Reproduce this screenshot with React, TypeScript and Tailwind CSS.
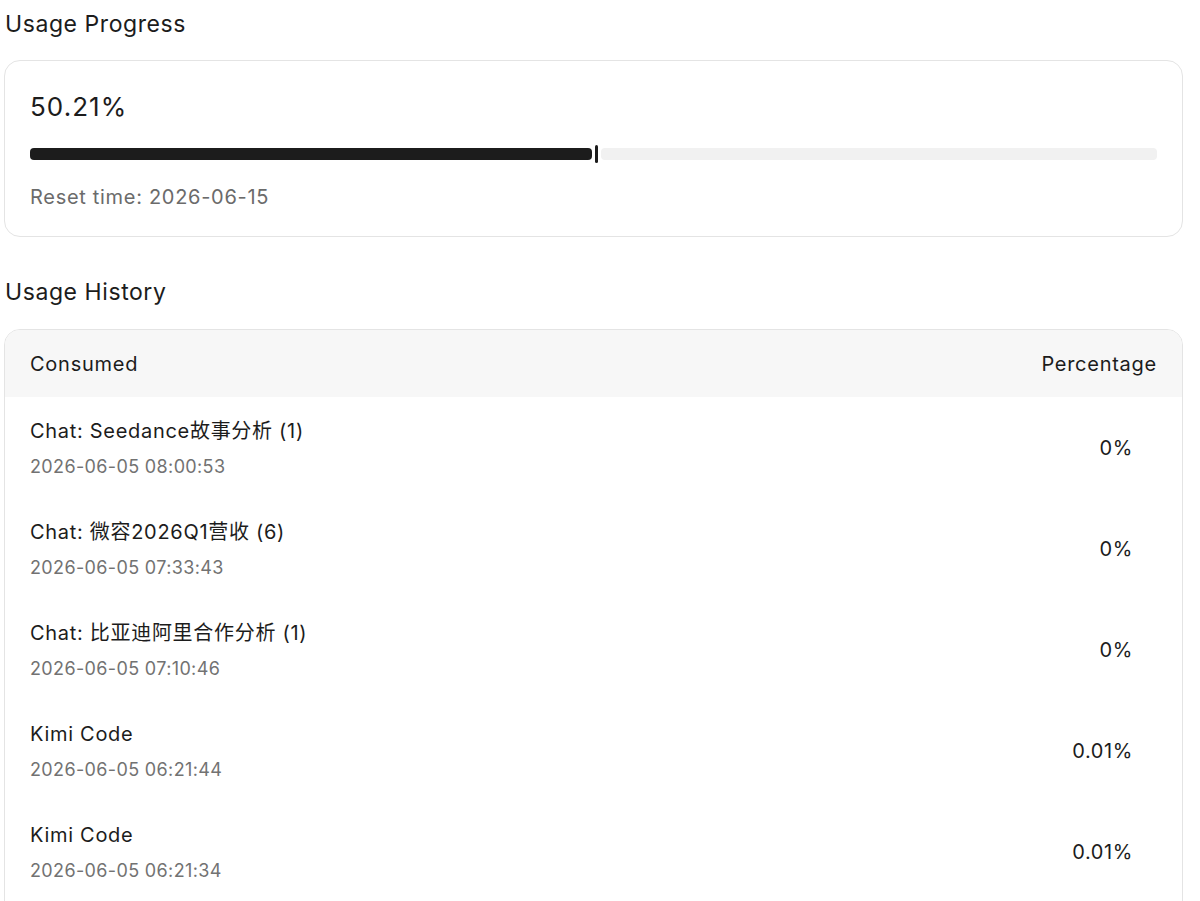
import React from 'react';

interface HistoryRow {
  title: string;
  time: string;
  percent: string;
}

const rows: HistoryRow[] = [
  { title: 'Chat: Seedance故事分析 (1)', time: '2026-06-05 08:00:53', percent: '0%' },
  { title: 'Chat: 微容2026Q1营收 (6)', time: '2026-06-05 07:33:43', percent: '0%' },
  { title: 'Chat: 比亚迪阿里合作分析 (1)', time: '2026-06-05 07:10:46', percent: '0%' },
  { title: 'Kimi Code', time: '2026-06-05 06:21:44', percent: '0.01%' },
  { title: 'Kimi Code', time: '2026-06-05 06:21:34', percent: '0.01%' },
];

const usage = 50.21;

function ProgressBar({ value }: { value: number }) {
  return (
    <div className="flex h-[18px] items-center">
      <div className="h-3 rounded-[4px] bg-[#1c1c1c]" style={{ width: `calc(${value}% - 4px)` }} />
      <div className="mx-[3px] h-[18px] w-[3px] rounded-full bg-[#1c1c1c]" />
      <div className="h-3 flex-1 rounded-[4px] bg-[#f1f1f1]" />
    </div>
  );
}

export default function App() {
  return (
    <div
      className="min-h-screen bg-white pl-[4px] pr-[17px] text-[#1c1c1c]"
      style={{ fontFamily: 'Inter, "Noto Sans CJK SC", sans-serif' }}
    >
      <h2 className="pl-[1px] pt-[9px] text-[23px] leading-[30px] font-normal tracking-[0.025em]">Usage Progress</h2>

      <div className="mt-[21px] rounded-[16px] border border-[#e4e4e4] px-[25px] pb-[25px] pt-[27px]">
        <div className="text-[26px] leading-[38px] tracking-[0.04em]">50.21%</div>
        <div className="mt-[19px]">
          <ProgressBar value={usage} />
        </div>
        <div className="mt-[20px] text-[20px] leading-[28px] tracking-[0.035em] text-[#6b6b6b]">
          Reset time: 2026-06-15
        </div>
      </div>

      <h2 className="mt-[40px] pl-[1px] text-[23px] leading-[30px] font-normal tracking-[0.025em]">Usage History</h2>

      <div className="mt-[22px] overflow-hidden rounded-t-[16px] border border-[#e4e4e4]">
        <div className="flex h-[67px] items-center justify-between bg-[#f7f7f7] px-[25px] text-[20px] tracking-[0.037em]">
          <span>Consumed</span>
          <span>Percentage</span>
        </div>
        {rows.map((row, i) => (
          <div key={i} className="flex h-[101px] items-center justify-between pl-[25px] pr-[49px]">
            <div className="flex flex-col">
              <span className="text-[20px] leading-[30px] tracking-[0.035em]">{row.title}</span>
              <span className="mt-[8px] text-[18px] leading-[26px] tracking-[0.02em] text-[#727272]">
                {row.time}
              </span>
            </div>
            <span className="text-[20px] tracking-[0.03em]">{row.percent}</span>
          </div>
        ))}
      </div>
    </div>
  );
}
